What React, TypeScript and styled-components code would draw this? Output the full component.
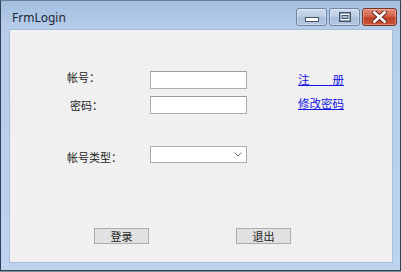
import React from "react";
import styled, { createGlobalStyle } from "styled-components";

const Global = createGlobalStyle`
  html, body {
    margin: 0;
    padding: 0;
    background: #7d8e9e;
  }
  * {
    box-sizing: border-box;
  }
`;

const Window = styled.div`
  width: 401px;
  height: 271px;
  display: flex;
  flex-direction: column;
  border: 1px solid #2f4152;
  border-top-color: #6a7f95;
  background: linear-gradient(to bottom, #a4bfdf 0px, #b6cdea 28px, #bcd4ee 100%);
  font-family: "Noto Sans CJK SC", "Noto Sans", sans-serif;
`;

const TitleBar = styled.div`
  height: 28px;
  display: flex;
  align-items: flex-start;
  padding: 0 3px 0 11px;
`;

const Title = styled.div`
  flex: 1;
  padding-top: 8px;
  font-family: "Noto Sans", "Open Sans", sans-serif;
  font-size: 12px;
  line-height: 18px;
  color: #1c2733;
`;

const Captions = styled.div`
  display: flex;
  gap: 2px;
  margin-top: 7px;
`;

const CaptionButton = styled.div<{ $close?: boolean; $w: number }>`
  width: ${(p) => p.$w}px;
  height: 18px;
  border-radius: 3px;
  display: flex;
  align-items: center;
  justify-content: center;
  border: 1px solid ${(p) => (p.$close ? "#7c3224" : "#6f86a5")};
  background: ${(p) =>
    p.$close
      ? "linear-gradient(to bottom, #e38a73 0%, #d2634a 45%, #be4026 55%, #c9573c 100%)"
      : "linear-gradient(to bottom, #cfdcec 0%, #bccee4 45%, #a9bfda 55%, #b4c8e0 100%)"};
  box-shadow: inset 0 0 0 1px rgba(255, 255, 255, 0.3);
`;

const Client = styled.div`
  flex: 1;
  margin: 0 7px 7px 8px;
  background: #f0f0f0;
  border: 1px solid #a6bed9;
  display: flex;
  flex-direction: column;
`;

const Top = styled.div`
  display: flex;
  padding: 41px 0 0 57px;
  gap: 51px;
`;

const Fields = styled.div`
  display: flex;
  flex-direction: column;
`;

const FieldRow = styled.div<{ $space: number }>`
  display: grid;
  grid-template-columns: 83px 97px;
  align-items: center;
  margin-top: ${(p) => p.$space}px;
`;

const Label = styled.span<{ $indent?: number; $shift?: number }>`
  font-size: 11px;
  line-height: 14px;
  color: #1e1e1e;
  padding-left: ${(p) => p.$indent ?? 0}px;
  position: relative;
  top: ${(p) => p.$shift ?? 0}px;
`;

const TextBox = styled.div`
  height: 18px;
  background: #ffffff;
  border: 1px solid #abadb3;
  border-top-color: #9a9ca3;
`;

const Combo = styled.div`
  height: 17px;
  background: #ffffff;
  border: 1px solid #acacac;
  display: flex;
  align-items: center;
  justify-content: flex-end;
  padding-right: 4px;
`;

const Links = styled.div`
  display: flex;
  flex-direction: column;
  gap: 8px;
`;

const Link = styled.a`
  font-size: 11.5px;
  line-height: 16px;
  color: #1414e6;
  text-decoration: underline;
  white-space: pre;
  cursor: pointer;
`;

const Actions = styled.div`
  display: flex;
  gap: 87px;
  padding-left: 84px;
  margin-top: 65px;
`;

const Button = styled.div`
  width: 55px;
  height: 16px;
  background: #e1e1e1;
  border: 1px solid #adadad;
  display: flex;
  align-items: center;
  justify-content: center;
  font-size: 11px;
  color: #1e1e1e;
`;

const MinIcon = () => (
  <svg width="14" height="5" viewBox="0 0 14 5" style={{ marginTop: 5 }}>
    <rect x="0.5" y="0.5" width="13" height="4" fill="#ffffff" stroke="#3f536b" />
  </svg>
);

const MaxIcon = () => (
  <svg width="12" height="10" viewBox="0 0 12 10">
    <rect x="0.5" y="0.5" width="11" height="9" fill="#3f536b" stroke="#3f536b" />
    <rect x="1.5" y="1.5" width="9" height="7" fill="#ffffff" />
    <rect x="3" y="3.5" width="6" height="3" fill="#aebfd6" stroke="#3f536b" />
  </svg>
);

const CloseIcon = () => (
  <svg width="15" height="12" viewBox="0 0 15 12">
    <path d="M2.5 1.5 L12.5 10.5 M12.5 1.5 L2.5 10.5" stroke="#5a1e14" strokeWidth="4.6" strokeLinecap="square" />
    <path d="M2.5 1.5 L12.5 10.5 M12.5 1.5 L2.5 10.5" stroke="#ffffff" strokeWidth="2.8" strokeLinecap="square" />
  </svg>
);

const Chevron = () => (
  <svg width="8" height="5" viewBox="0 0 8 5">
    <path d="M0.5 0.5 L4 4 L7.5 0.5" fill="none" stroke="#7a7a7a" strokeWidth="1" />
  </svg>
);

export default function App() {
  return (
    <>
      <Global />
      <Window>
        <TitleBar>
          <Title>FrmLogin</Title>
          <Captions>
            <CaptionButton $w={31}>
              <MinIcon />
            </CaptionButton>
            <CaptionButton $w={31}>
              <MaxIcon />
            </CaptionButton>
            <CaptionButton $w={35} $close>
              <CloseIcon />
            </CaptionButton>
          </Captions>
        </TitleBar>
        <Client>
          <Top>
            <Fields>
              <FieldRow $space={0}>
                <Label $shift={-3}>帐号：</Label>
                <TextBox />
              </FieldRow>
              <FieldRow $space={7}>
                <Label $indent={3}>密码：</Label>
                <TextBox />
              </FieldRow>
              <FieldRow $space={32}>
                <Label $shift={2}>帐号类型：</Label>
                <Combo>
                  <Chevron />
                </Combo>
              </FieldRow>
            </Fields>
            <Links>
              <Link>{"注　　册"}</Link>
              <Link>修改密码</Link>
            </Links>
          </Top>
          <Actions>
            <Button>登录</Button>
            <Button>退出</Button>
          </Actions>
        </Client>
      </Window>
    </>
  );
}
